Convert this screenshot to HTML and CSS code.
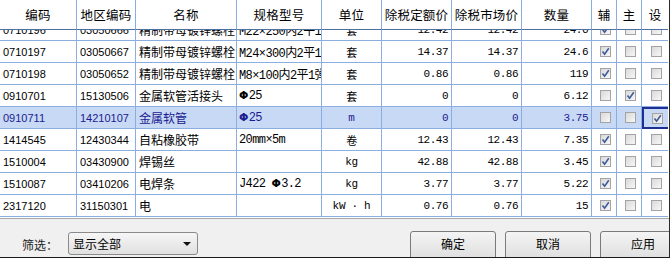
FILE: index.html
```html
<!DOCTYPE html>
<html lang="zh-CN">

<head>
  <meta charset="UTF-8">
  <title>材料设置</title>
  <link rel="stylesheet" href="styles.css">
</head>

<body>

  <div class="dialog">

    <div class="grid">
      <div class="row head">
        <div>编码</div>
        <div>地区编码</div>
        <div>名称</div>
        <div>规格型号</div>
        <div>单位</div>
        <div>除税定额价</div>
        <div>除税市场价</div>
        <div>数量</div>
        <div>辅</div>
        <div>主</div>
        <div>设</div>
      </div>

      <div class="body">
        <div class="scroll" id="rows"></div>
      </div>
    </div>

    <div class="panel">
      <span class="label">筛选：</span>
      <div class="select">
        <span>显示全部</span>
        <span class="arrow"></span>
      </div>
      <div class="buttons">
        <button>确定</button>
        <button>取消</button>
        <button>应用</button>
      </div>
    </div>

  </div>

  <script>
    let data = [
      ["0710196", "03050666", "精制带母镀锌螺栓", "M22×250内2平1", "套", "12.42", "12.42", "24.6", 1, 0, 0],
      ["0710197", "03050667", "精制带母镀锌螺栓", "M24×300内2平1", "套", "14.37", "14.37", "24.6", 1, 0, 0],
      ["0710198", "03050652", "精制带母镀锌螺栓", "M8×100内2平1弹", "套", "0.86", "0.86", "119", 1, 0, 0],
      ["0910701", "15130506", "金属软管活接头", "<b>Φ</b>25", "套", "0", "0", "6.12", 0, 1, 0],
      ["0910711", "14210107", "金属软管", "<b>Φ</b>25", "m", "0", "0", "3.75", 0, 0, 1],
      ["1414545", "12430344", "自粘橡胶带", "20mm×5m", "卷", "12.43", "12.43", "7.35", 1, 0, 0],
      ["1510004", "03430900", "焊锡丝", "", "kg", "42.88", "42.88", "3.45", 1, 0, 0],
      ["1510087", "03410206", "电焊条", "J422 <b class=\"gap\">Φ</b>3.2", "kg", "3.77", "3.77", "5.22", 1, 0, 0],
      ["2317120", "31150301", "电", "", "kW · h", "0.76", "0.76", "15", 1, 0, 0]
    ];

    let check = '<svg width="9" height="9" viewBox="0 0 9 9"><path d="M1.5 4.5 L3.6 7.2 L7.8 1.2" fill="none" stroke="#3d5a99" stroke-width="1.6"/></svg>';

    let rows = document.getElementById('rows');
    let classes = ["code", "code", "name", "spec", "unit", "num", "num", "num"];

    data.forEach((item, index) => {
      let row = document.createElement('div');
      row.className = index === 4 ? 'row selected' : 'row';
      let html = '';
      for (let i = 0; i < 8; i++) {
        html += `<div class="${classes[i]}">${item[i]}</div>`;
      }
      for (let i = 8; i < 11; i++) {
        let focus = index === 4 && i === 10 ? ' focus' : '';
        html += `<div class="cb${focus}"><span class="box">${item[i] ? check : ''}</span></div>`;
      }
      row.innerHTML = html;
      rows.appendChild(row);
    });
  </script>
</body>

</html>
```

FILE: styles.css
```css
body {
  margin: 0;
  width: 670px;
  height: 258px;
  overflow: hidden;
  font-family: "Liberation Sans", "Noto Sans CJK SC", sans-serif;
  font-size: 12px;
  color: #000;
}

.dialog {
  display: flex;
  flex-direction: column;
  height: 258px;
  box-sizing: border-box;
  border-right: 1px solid #2b2b2b;
  border-bottom: 1px solid #1a1a1a;
  background: #f0f0f0;
}

.grid {
  background: #fff;
}

.row {
  display: grid;
  grid-template-columns: 77px 59px 101px 85px 60px 70px 70px 70px 25px 25px 26px;
  height: 22px;
}

.row > div {
  box-sizing: border-box;
  border-right: 1px solid #8aaee0;
  border-bottom: 1px solid #8aaee0;
  display: flex;
  align-items: center;
  white-space: nowrap;
  overflow: hidden;
}

.row > div:last-child {
  border-right: none;
}

.head {
  height: 30px;
}

.head > div {
  justify-content: center;
  font-family: "Noto Sans CJK SC", sans-serif;
  font-size: 12.5px;
  letter-spacing: 0.2px;
  border-bottom-color: #4f6f9f;
  padding-bottom: 1px;
}

.body {
  height: 188px;
  overflow: hidden;
}

.scroll {
  margin-top: -11px;
}

.code {
  padding-left: 3px;
  font-size: 11px;
}

.name {
  padding-left: 3px;
  font-family: "Noto Sans CJK SC", sans-serif;
  font-size: 12px;
}

.spec {
  padding-left: 2px;
  font-family: "Liberation Mono", "Noto Sans CJK SC", monospace;
  font-size: 12px;
  letter-spacing: -0.6px;
}

.spec b {
  font-family: "DejaVu Sans", sans-serif;
  font-size: 11px;
  margin-right: 1px;
}

.spec .gap {
  margin-left: 6px;
}

.unit {
  justify-content: center;
  font-family: "Liberation Mono", "Noto Sans CJK SC", monospace;
  font-size: 11px;
  letter-spacing: -0.3px;
}

.num {
  justify-content: flex-end;
  padding-right: 3px;
  font-family: "Liberation Mono", monospace;
  font-size: 11px;
  letter-spacing: -0.5px;
}

.cb {
  justify-content: center;
  padding-left: 3px;
}

.box {
  width: 11px;
  height: 11px;
  box-sizing: border-box;
  border: 1px solid #a3a3a3;
  background: linear-gradient(135deg, #d9d9d9, #f7f7f7);
  display: flex;
  align-items: center;
  justify-content: center;
}

.selected > div {
  background: #c8d9f5;
  color: #1b1b8f;
}

.row > .focus {
  border: 2px solid #1d2f93;
  border-right: 2px solid #1d2f93;
}

.panel {
  flex: 1;
  display: flex;
  align-items: flex-start;
  border-top: 1px solid #a8a8a8;
  padding: 13px 0 0 22px;
  overflow: hidden;
}

.label {
  font-family: "Noto Sans CJK SC", sans-serif;
  font-size: 12px;
  color: #222;
  margin-top: 4px;
  width: 46px;
}

.select {
  width: 130px;
  height: 23px;
  box-sizing: border-box;
  border: 1px solid #8a8a8a;
  border-radius: 3px;
  background: linear-gradient(#f6f6f6, #e0e0e0);
  display: flex;
  align-items: center;
  justify-content: space-between;
  padding: 0 6px 0 4px;
  font-family: "Noto Sans CJK SC", sans-serif;
  font-size: 12px;
}

.arrow {
  width: 0;
  height: 0;
  border-left: 4px solid transparent;
  border-right: 4px solid transparent;
  border-top: 4px solid #111;
}

.buttons {
  display: flex;
  gap: 9px;
  margin-left: auto;
  margin-right: -17px;
  margin-top: -1px;
}

.buttons button {
  width: 86px;
  height: 32px;
  border: 1px solid #7a7a7a;
  border-radius: 3px;
  background: linear-gradient(#f4f4f4, #dcdcdc);
  font-family: "Noto Sans CJK SC", sans-serif;
  font-size: 12px;
  color: #000;
  padding: 0 0 7px;
}
```
